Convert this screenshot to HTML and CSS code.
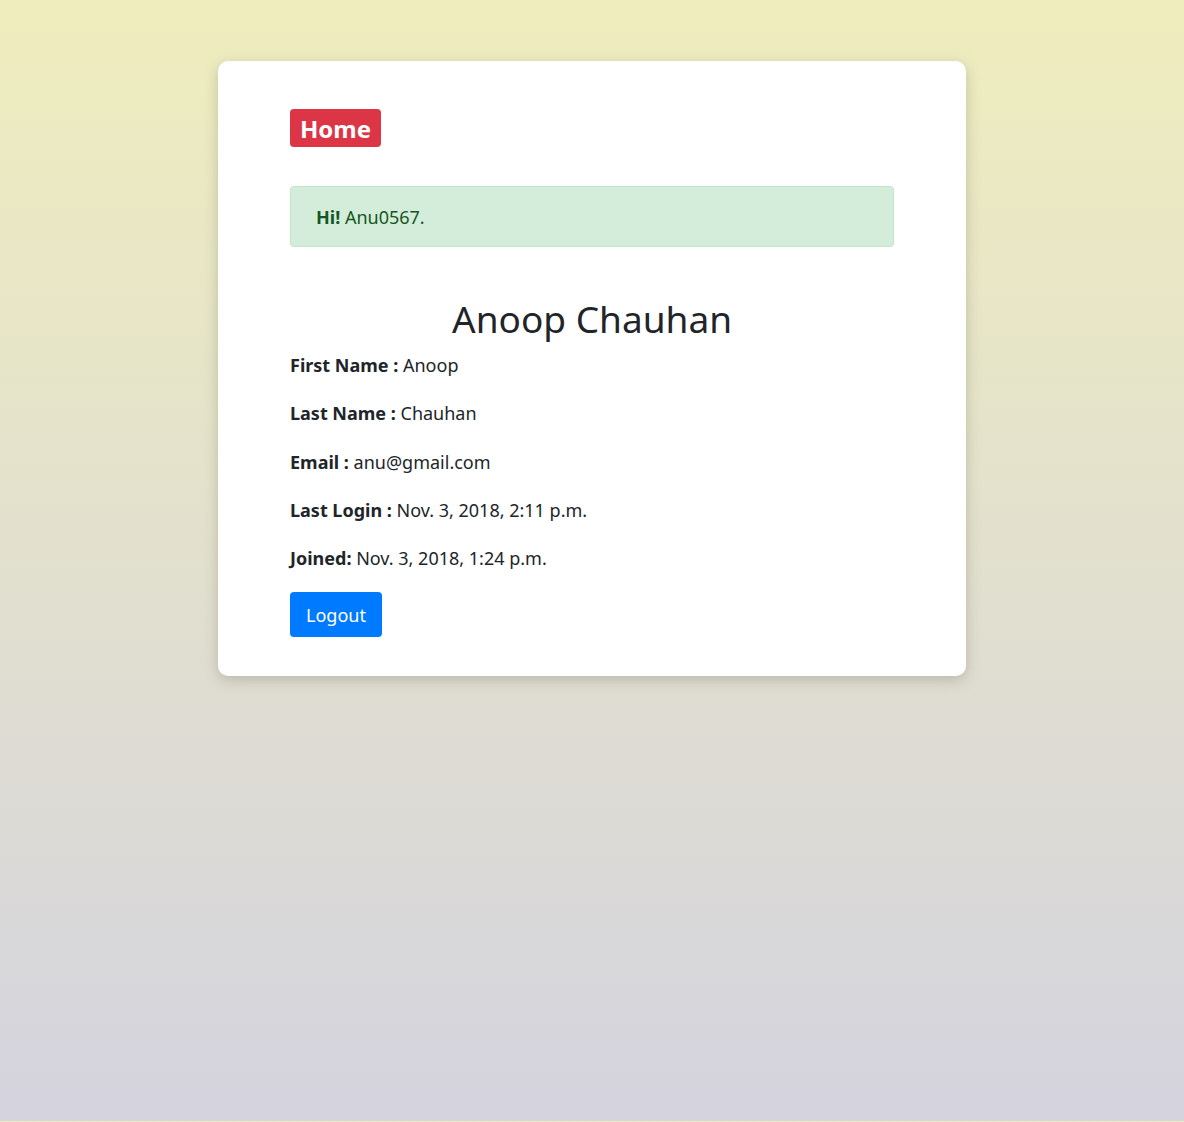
FILE: index.html
```html
<!DOCTYPE html>
<html lang="en">
<head>
<meta charset="utf-8">
<title>Profile</title>
<link rel="stylesheet" href="styles.css">
</head>
<body>
<main class="card">
  <a class="home" href="#">Home</a>
  <div class="alert"><strong>Hi!</strong> Anu0567.</div>
  <h1 class="name">Anoop Chauhan</h1>
  <p class="row"><strong>First Name :</strong> Anoop</p>
  <p class="row"><strong>Last Name :</strong> Chauhan</p>
  <p class="row"><strong>Email :</strong> anu@gmail.com</p>
  <p class="row"><strong>Last Login :</strong> Nov. 3, 2018, 2:11 p.m.</p>
  <p class="row"><strong>Joined:</strong> Nov. 3, 2018, 1:24 p.m.</p>
  <button class="logout" type="button">Logout</button>
</main>
</body>
</html>
```

FILE: styles.css
```css
html {
  background: linear-gradient(180deg, #efedbd 0%, #d4d3de 100%);
  min-height: 1121px;
}
body {
  margin: 0;
  padding: 61px 0 0;
  min-height: 1060px;
  font-family: "Noto Sans", "Open Sans", sans-serif;
  color: #212529;
}
.card {
  width: 748px;
  box-sizing: border-box;
  margin: 0 auto;
  background: #fff;
  border-radius: 10px;
  padding: 48px 72px 39px;
  box-shadow: 0 4px 14px rgba(120, 118, 95, 0.35);
  display: flex;
  flex-direction: column;
  align-items: flex-start;
}
.home {
  display: inline-block;
  background: #dc3545;
  color: #fff;
  font-weight: 700;
  font-size: 24px;
  line-height: 39px;
  height: 38px;
  padding: 0 10px;
  border-radius: 4px;
  text-decoration: none;
}
.alert {
  align-self: stretch;
  margin-top: 39px;
  background: #d4edda;
  border: 1px solid #c3e6cb;
  color: #155724;
  border-radius: 4px;
  padding: 16px 25px 15px;
  font-size: 18px;
  line-height: 28px;
}
.alert strong { font-weight: 700; }
.name {
  align-self: stretch;
  text-align: center;
  font-size: 37px;
  font-weight: 400;
  line-height: 48px;
  margin: 48px 0 7px;
}
.row {
  margin: 0 0 18.3px;
  font-size: 18px;
  line-height: 30px;
}
.row strong { font-weight: 700; }
.logout {
  margin-top: 1px;
  background: #007bff;
  color: #fff;
  border: none;
  border-radius: 4px;
  height: 45px;
  width: 92px;
  font-family: inherit;
  font-size: 18px;
  cursor: pointer;
}
```
